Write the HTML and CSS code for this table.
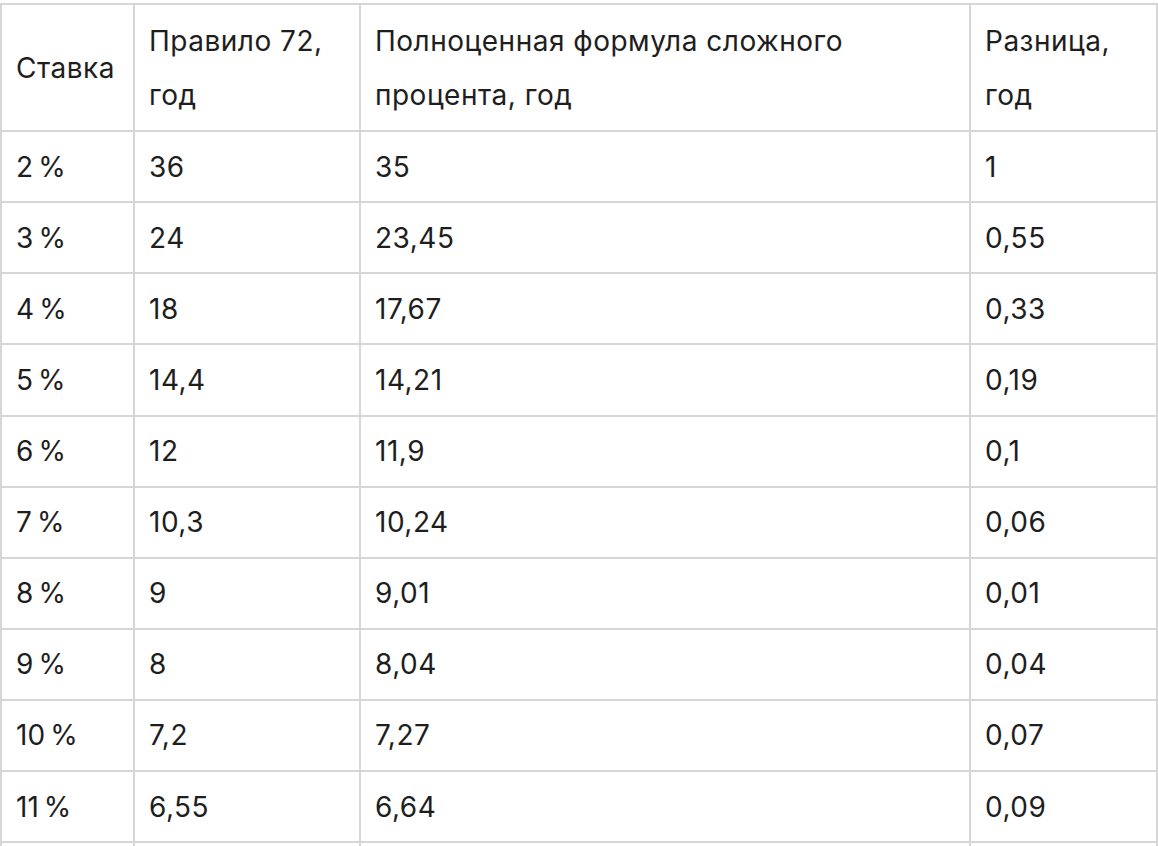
FILE: index.html
```html
<!DOCTYPE html>
<html lang="ru">
<head>
<meta charset="utf-8">
<link rel="stylesheet" href="styles.css">
</head>
<body>
<table class="rates">
  <colgroup>
    <col class="c1"><col class="c2"><col class="c3"><col class="c4">
  </colgroup>
  <thead>
    <tr><th>Ставка</th><th>Правило 72, год</th><th>Полноценная формула сложного процента, год</th><th>Разница, год</th></tr>
  </thead>
  <tbody>
    <tr><td>2&#8239;%</td><td>36</td><td>35</td><td>1</td></tr>
    <tr><td>3&#8239;%</td><td>24</td><td>23,45</td><td>0,55</td></tr>
    <tr><td>4&#8239;%</td><td>18</td><td>17,67</td><td>0,33</td></tr>
    <tr><td>5&#8239;%</td><td>14,4</td><td>14,21</td><td>0,19</td></tr>
    <tr><td>6&#8239;%</td><td>12</td><td>11,9</td><td>0,1</td></tr>
    <tr><td>7&#8239;%</td><td>10,3</td><td>10,24</td><td>0,06</td></tr>
    <tr><td>8&#8239;%</td><td>9</td><td>9,01</td><td>0,01</td></tr>
    <tr><td>9&#8239;%</td><td>8</td><td>8,04</td><td>0,04</td></tr>
    <tr><td>10&#8239;%</td><td>7,2</td><td>7,27</td><td>0,07</td></tr>
    <tr><td>11&#8239;%</td><td>6,55</td><td>6,64</td><td>0,09</td></tr>
    <tr class="tail"><td></td><td></td><td></td><td></td></tr>
  </tbody>
</table>
</body>
</html>
```

FILE: styles.css
```css
html, body {
  margin: 0;
  padding: 0;
  background: #ffffff;
}
body {
  padding-top: 3px;
  font-family: Inter, "Noto Sans", sans-serif;
  color: #1e1e1e;
}
.rates {
  border-collapse: collapse;
  table-layout: fixed;
  width: 1156px;
  font-size: 28px;
  line-height: 54px;
  letter-spacing: 0.5px;
}
.rates .c1 { width: 133px; }
.rates .c2 { width: 226px; }
.rates .c3 { width: 610px; }
.rates .c4 { width: 187px; }
.rates th,
.rates td {
  border: 2px solid #d6d6d6;
  padding: 7.55px 14px;
  text-align: left;
  vertical-align: middle;
  font-weight: 400;
}
.rates th {
  padding-top: 8.6px;
  padding-bottom: 8.6px;
}
.rates .tail td {
  height: 54px;
}
```
